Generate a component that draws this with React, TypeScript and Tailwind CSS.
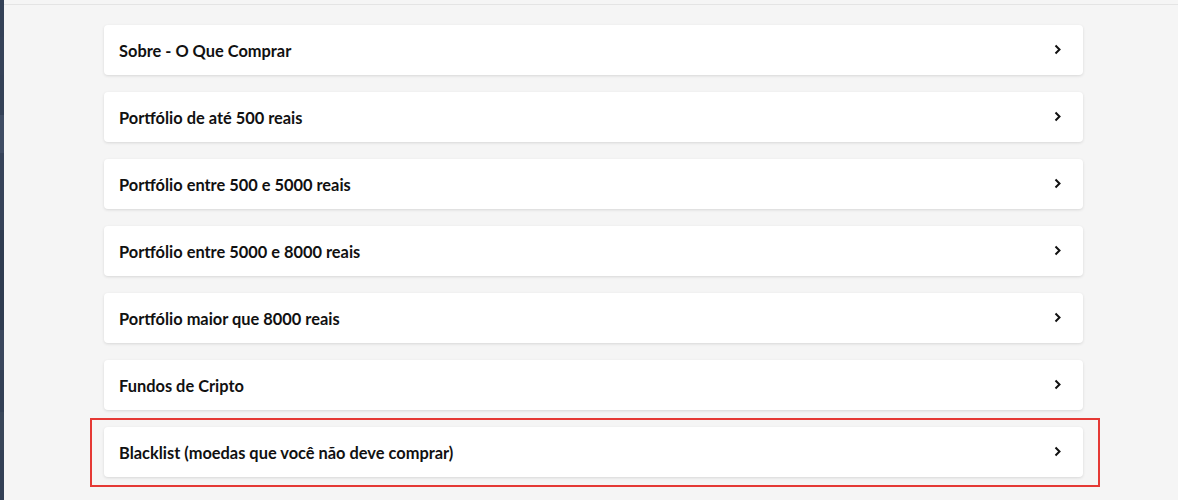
const items = [
  'Sobre - O Que Comprar',
  'Portfólio de até 500 reais',
  'Portfólio entre 500 e 5000 reais',
  'Portfólio entre 5000 e 8000 reais',
  'Portfólio maior que 8000 reais',
  'Fundos de Cripto',
  'Blacklist (moedas que você não deve comprar)',
];

// faixas da barra lateral (cortada na esquerda)
const strip = [
  { h: 37, c: 'bg-[#344157]' },
  { h: 38, c: 'bg-[#354258]' },
  { h: 40, c: 'bg-[#344157]' },
  { h: 38, c: 'bg-[#3f4c63]' },
  { h: 39, c: 'bg-[#364359]' },
  { h: 38, c: 'bg-[#364359]' },
  { h: 100, c: 'bg-[#2f3c50]' },
  { h: 40, c: 'bg-[#3a475d]' },
  { h: 42, c: 'bg-[#334055]' },
  { h: 38, c: 'bg-[#394659]' },
  { h: 50, c: 'bg-[#334055]' },
];

function Chevron() {
  return (
    <svg width="8" height="11" viewBox="0 0 8 11" fill="none" className="-mt-[2px]">
      <path d="M1.5 1.5L5.5 5.5L1.5 9.5" stroke="#111" strokeWidth="2" />
    </svg>
  );
}

export default function App() {
  return (
    <div
      className="flex h-[500px] w-[1178px] overflow-hidden bg-[#f5f5f5]"
      style={{ fontFamily: 'Lato, "Open Sans", sans-serif' }}
    >
      <div className="flex w-[4px] flex-col">
        {strip.map((s, i) => (
          <div key={i} className={`${s.c} shrink-0`} style={{ height: s.h }} />
        ))}
      </div>
      <div className="flex-1">
        <div className="h-[5px] border-b border-[#e4e4e4]" />
        <div className="relative ml-[100px] flex w-[979px] flex-col gap-[17px] pt-[20px]">
          {items.map((t) => (
            <div
              key={t}
              className="flex h-[50px] items-center justify-between rounded-[4px] bg-white pl-[15px] pr-[21px] shadow-[0_1px_3px_rgba(0,0,0,0.12)]"
            >
              <span className="pt-[2px] text-[16.4px] font-bold text-[#111]">{t}</span>
              <Chevron />
            </div>
          ))}
          <div className="pointer-events-none absolute left-[-14px] top-[413px] h-[69px] w-[1010px] border-2 border-[#e53935]" />
        </div>
      </div>
    </div>
  );
}
